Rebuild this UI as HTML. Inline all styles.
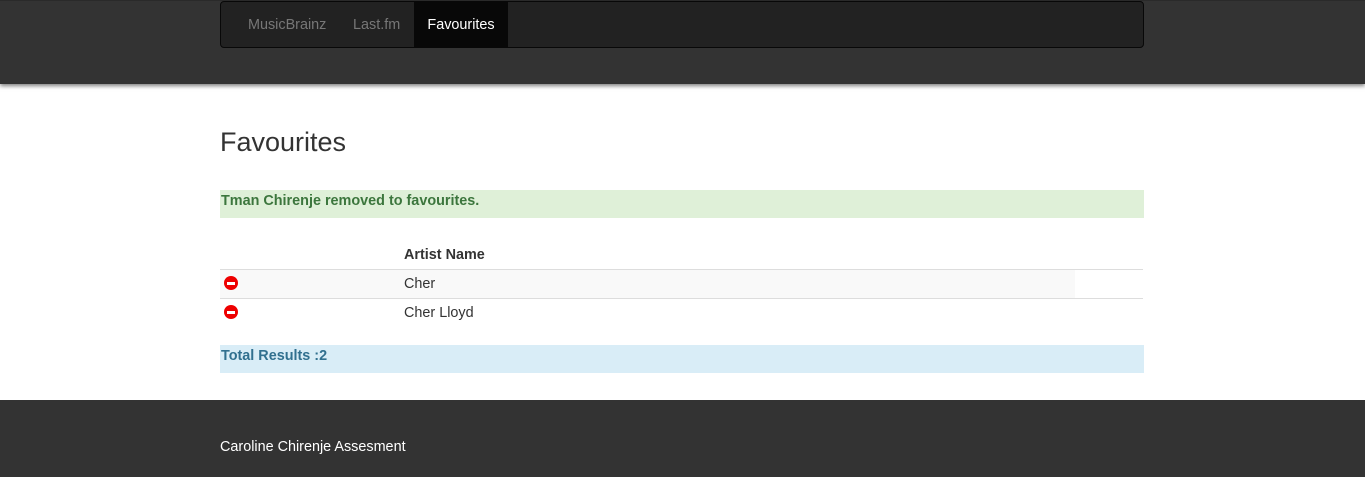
<!DOCTYPE html>
<html><head><style>
body{margin:0;font-family:"Liberation Sans",sans-serif;font-size:14.4px;color:#333;background:#fff;width:1365px;height:477px;overflow:hidden;position:relative}
.top{position:absolute;left:0;top:0;width:1365px;height:84px;background:#333;border-top:1px solid #2a2a2a;box-sizing:border-box;box-shadow:0 2px 4px rgba(0,0,0,.5)}
.nav{position:absolute;left:220px;top:0px;width:922px;height:45px;background:#222;border:1px solid #080808;border-radius:4px}
.nav a{position:absolute;top:0;height:45px;line-height:46px;color:#777;text-decoration:none}
.fav{position:absolute;left:414px;top:1px;width:94px;height:46px;background:#080808;color:#fff;line-height:47px;text-align:center}
h1{position:absolute;left:220px;top:127px;margin:0;font-size:27px;font-weight:400;color:#333}
.ok{position:absolute;left:220px;top:190px;width:924px;height:28px;background:#dff0d8;color:#3c763d;font-weight:bold;line-height:22px;padding-left:1px;box-sizing:border-box}
.info{position:absolute;left:220px;top:345px;width:924px;height:28px;background:#d9edf7;color:#31708f;font-weight:bold;line-height:22px;padding-left:1px;box-sizing:border-box}
.th{position:absolute;left:404px;top:247px;font-weight:bold}
.line{position:absolute;left:220px;width:923px;height:1px;background:#ddd}
.row{position:absolute;left:220px;width:855px;height:28px}
.row span{position:absolute;left:184px;top:6px}
.ic{position:absolute;left:4px;top:6px;width:14px;height:14px;border-radius:50%;background:#e00}
.ic:after{content:"";position:absolute;left:3px;top:6px;width:8px;height:3px;background:#fff}
.foot{position:absolute;left:0;top:400px;width:1365px;height:77px;background:#333;color:#fff}
.foot div{position:absolute;left:220px;top:39px}
</style></head><body>
<div class="top"><div class="nav">
<a style="left:27px">MusicBrainz</a><a style="left:132px">Last.fm</a>
</div><div class="fav">Favourites</div></div>
<h1>Favourites</h1>
<div class="ok">Tman Chirenje removed to favourites.</div>
<div class="th">Artist Name</div>
<div class="line" style="top:269px"></div>
<div class="row" style="top:270px;background:#f9f9f9"><div class="ic"></div><span>Cher</span></div>
<div class="line" style="top:298px"></div>
<div class="row" style="top:299px"><div class="ic"></div><span>Cher Lloyd</span></div>
<div class="info">Total Results :2</div>
<div class="foot"><div>Caroline Chirenje Assesment</div></div>
</body></html>
